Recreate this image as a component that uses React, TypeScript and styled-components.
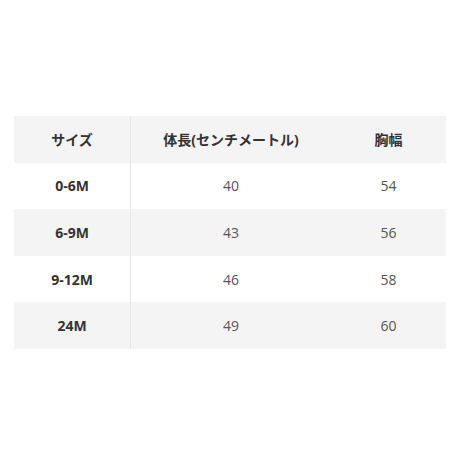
import React from "react";
import styled, { createGlobalStyle } from "styled-components";

const Global = createGlobalStyle`
  html, body { margin: 0; padding: 0; background: #fff; }
  body { font-family: "Open Sans", "Noto Sans CJK JP", sans-serif; }
`;

const Page = styled.div`
  width: 460px;
  height: 460px;
  padding: 116px 15px 0 14px;
  box-sizing: border-box;
`;

const Table = styled.table`
  width: 431px;
  border-collapse: collapse;
  table-layout: fixed;
`;

const Row = styled.tr<{ $shade: boolean }>`
  background: ${(p) => (p.$shade ? "#f4f4f4" : "#ffffff")};
  height: 46.6px;
`;

const Cell = styled.td<{ $head?: boolean; $bold?: boolean; $w?: number; $divider?: boolean }>`
  width: ${(p) => (p.$w ? `${p.$w}px` : "auto")};
  padding: 0;
  text-align: center;
  vertical-align: middle;
  font-size: 14px;
  font-weight: ${(p) => (p.$head || p.$bold ? 700 : 400)};
  color: ${(p) => (p.$head || p.$bold ? "#333333" : "#555555")};
  border-right: ${(p) => (p.$divider ? "1px solid #e6e6e6" : "none")};
`;

const rows = [
  ["0-6M", "40", "54"],
  ["6-9M", "43", "56"],
  ["9-12M", "46", "58"],
  ["24M", "49", "60"],
];

export default function App() {
  return (
    <>
      <Global />
      <Page>
        <Table>
          <tbody>
            <Row $shade>
              <Cell as="th" $head $w={116} $divider>サイズ</Cell>
              <Cell as="th" $head $w={200}>体長(センチメートル)</Cell>
              <Cell as="th" $head $w={115}>胸幅</Cell>
            </Row>
            {rows.map((r, i) => (
              <Row key={r[0]} $shade={i % 2 === 1}>
                <Cell $bold $divider>{r[0]}</Cell>
                <Cell>{r[1]}</Cell>
                <Cell>{r[2]}</Cell>
              </Row>
            ))}
          </tbody>
        </Table>
      </Page>
    </>
  );
}
